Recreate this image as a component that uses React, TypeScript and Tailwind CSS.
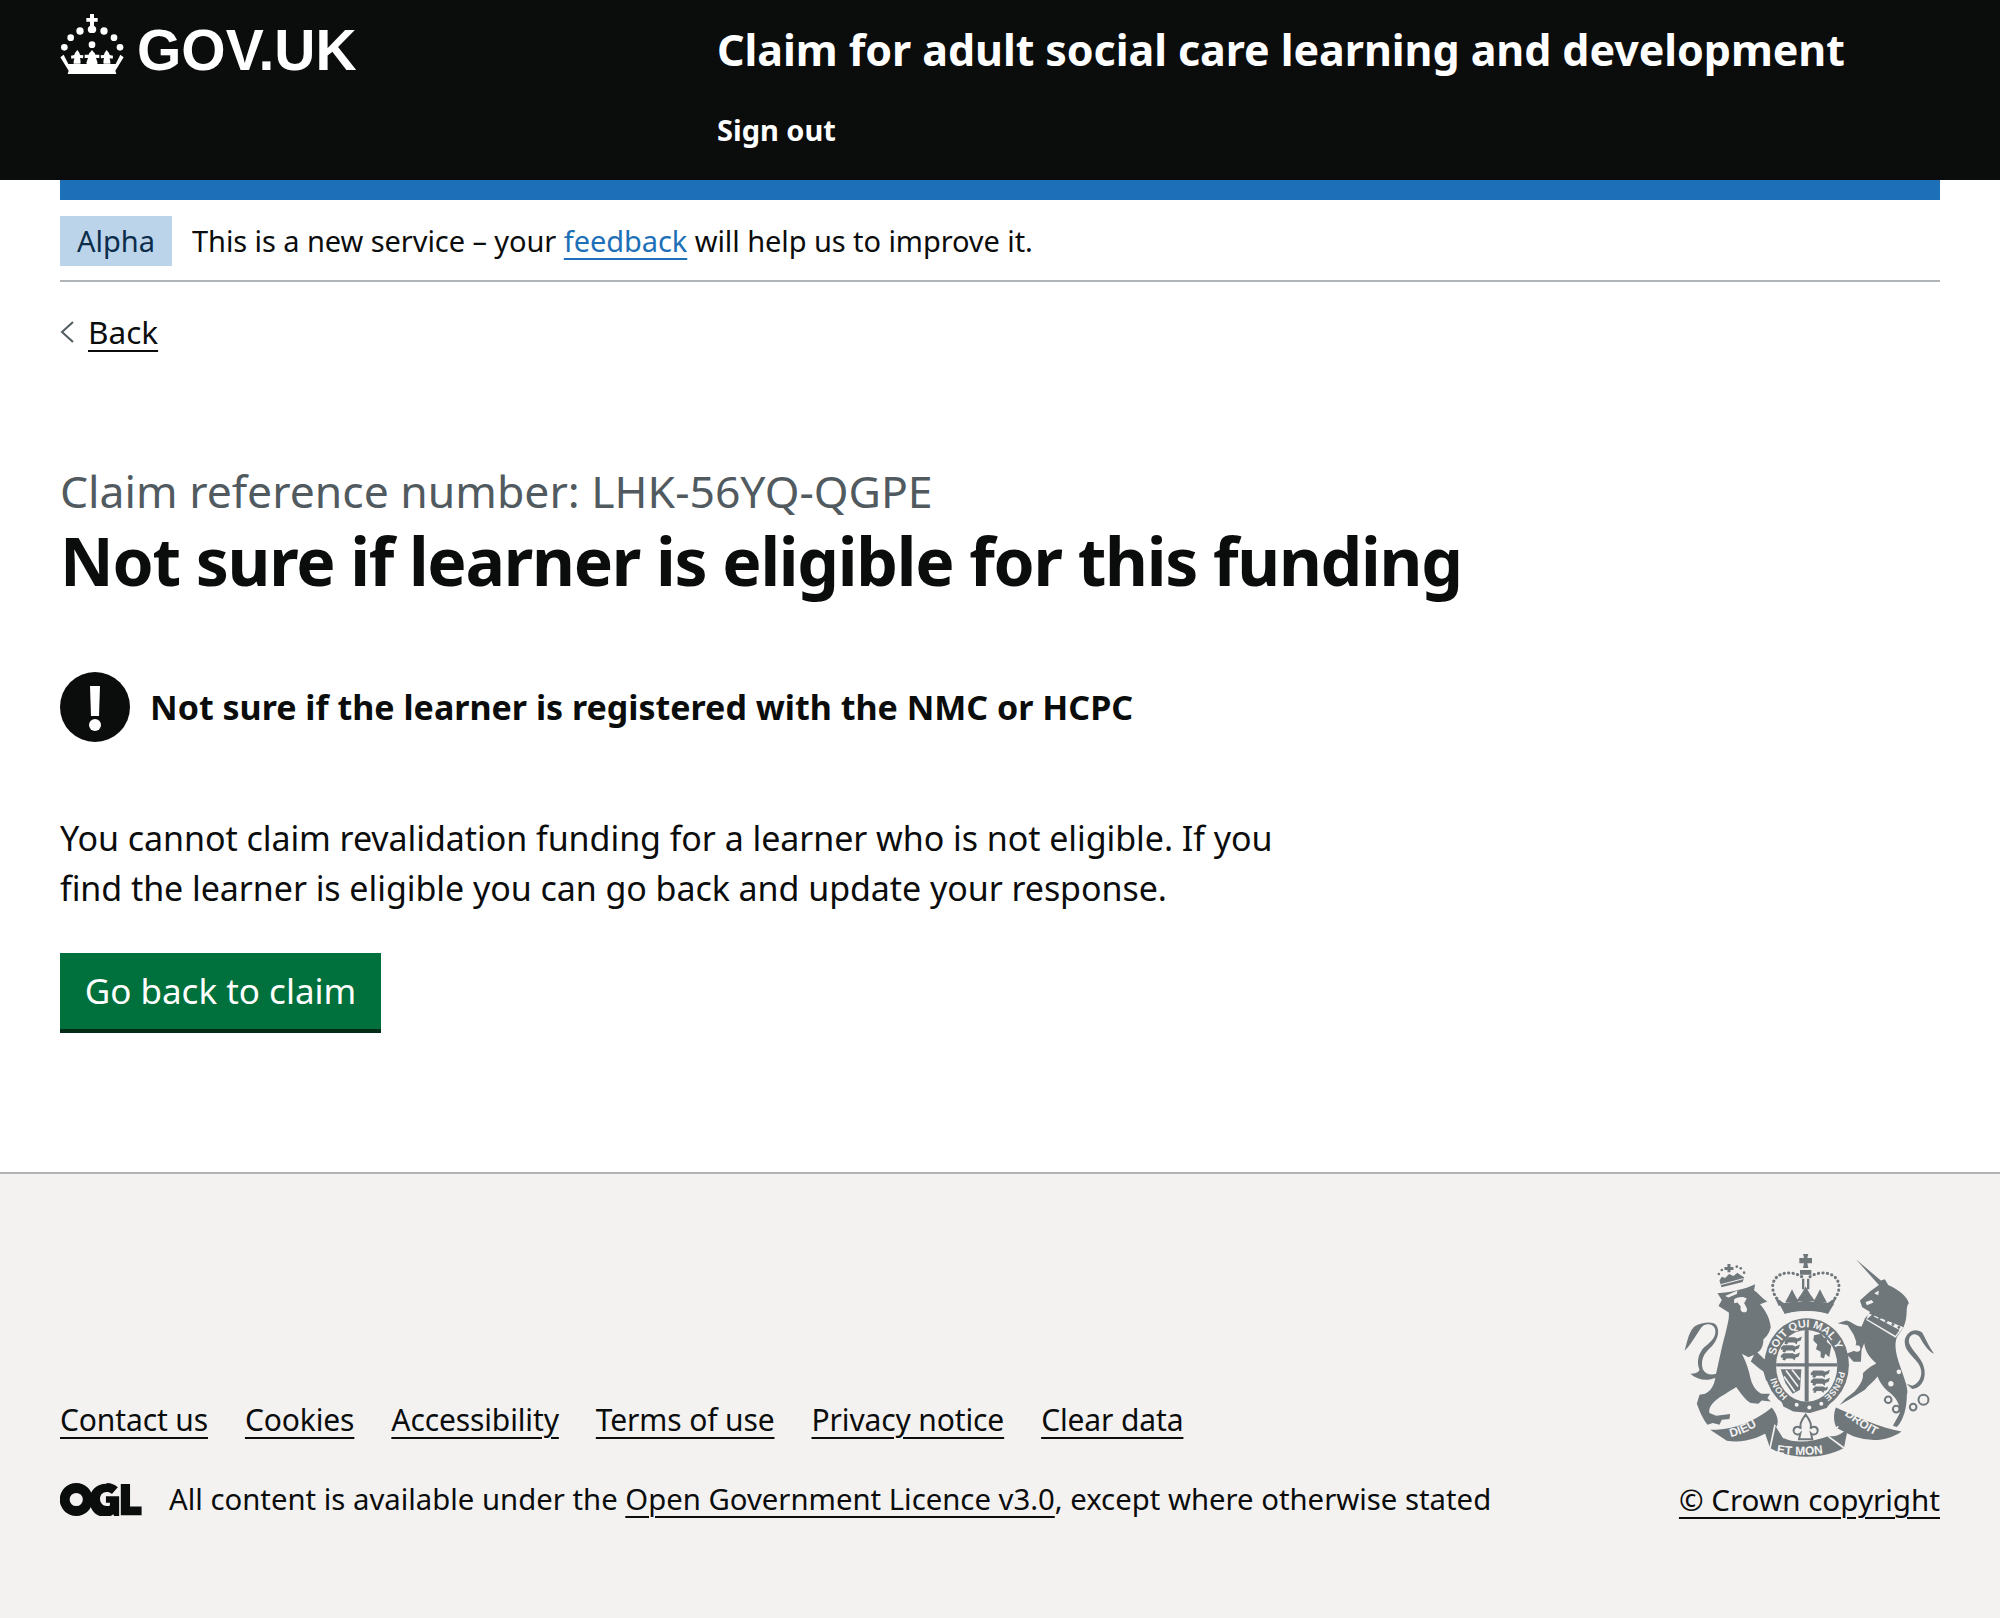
import React from 'react';

const Crown = () => (
  <svg viewBox="180 42 192 180" className="w-[64px] h-[60px] shrink-0" fill="#fff">
    <path d="M270 42h12v12h11v11h-11v12c9 4 9 18 0 22h-12c-9-4-9-18 0-22V65h-11V54h11z" />
    <circle cx="240" cy="93" r="11" />
    <circle cx="312" cy="93" r="11" />
    <circle cx="212" cy="113" r="10" />
    <circle cx="342" cy="113" r="10" />
    <circle cx="193" cy="142" r="10" />
    <circle cx="360" cy="142" r="10" />
    <circle cx="276" cy="134" r="10" />
    <path d="M276 150c6 8 10 10 10 14l12 0 0 10-10 0c2 8 6 12 4 18l-32 0c-2-6 2-10 4-18l-10 0 0-10 12 0c0-4 4-6 10-14z" />
    <path d="M232 150c5 7 8 11 8 15l10 1-1 9-9-1c1 7 3 11 1 17l-20 0c-1-6 1-10 2-16l-9 1-1-9 10-2c0-4 4-8 9-15z" />
    <path d="M320 150c-5 7-8 11-8 15l-10 1 1 9 9-1c-1 7-3 11-1 17l20 0c1-6-1-10-2-16l9 1 1-9-10-2c0-4-4-8-9-15z" />
    <path d="M181 172l10-8 14 28 142 0 14-28 10 8-25 40 3 10-146 0 3-10z" />
  </svg>
);

const Ogl = () => (
  <svg viewBox="60 85 246 100" className="w-[82px] h-[33px] shrink-0" fill="#0b0c0c">
    <path fillRule="evenodd" d="M108 85a50 50 0 1 0 0 100a50 50 0 1 0 0-100zm0 30a20 20 0 1 1 0 40a20 20 0 1 1 0-40z" />
    <path d="M200 85c14 0 26 5 34 13l-18 20c-5-4-10-6-16-6-12 0-20 9-20 21s8 22 21 22c4 0 7-1 9-2v-8h-12v-20h40v62h-14l-4-7c-6 5-14 8-24 8-28 0-48-23-48-51s20-50 52-50z" />
    <path d="M243 88h28v68h35v27h-63z" />
  </svg>
);

const Crest = () => (
  <svg viewBox="72 42 750 610" className="w-[250px] h-[203px] mr-[6px]" fill="#6f777b">
    <defs>
      <clipPath id="shieldClip">
        <ellipse cx="440" cy="378" rx="92" ry="108" />
      </clipPath>
    </defs>
    {/* lion */}
    <g transform="translate(60 30)">
      <path d="M112 130C150 128 195 118 225 103L222 122C235 130 245 145 262 155L240 163C255 180 270 205 272 232C268 250 258 262 250 268C250 285 245 300 232 308L250 325C268 335 285 360 284 378C280 392 270 398 258 392L250 365C235 355 225 345 212 335L222 315L205 322L185 312C195 330 205 355 210 380C215 405 228 425 245 432L270 432L262 445L272 455L245 452L235 462L212 460C195 450 185 435 168 412C150 425 120 440 103 455C92 465 85 478 88 490L108 498L150 493L148 508L125 510L118 525L98 520L82 525C70 510 60 490 50 462L58 435L75 432C95 420 102 405 105 385C115 340 125 290 135 255C142 225 148 205 146 188L115 168L125 150Z" />
      <path d="M108 383C80 395 55 392 30 372C45 372 55 368 58 360C48 335 55 310 72 292C90 278 110 262 105 238C100 222 82 220 68 228C55 240 40 275 13 303C22 270 28 240 45 228C65 218 95 212 108 225C122 245 110 275 92 292C72 310 60 330 68 358C75 372 90 378 108 372Z" />
      <path d="M135 138L172 122L170 132L145 143ZM162 148C175 140 190 138 200 146L192 160C198 170 205 180 198 186C188 190 178 184 182 170L172 158L162 160Z" fill="#f3f2f1" />
      {/* lion crown */}
      <path d="M142 42h9v9h9v9h-9v7h-9v-7h-9v-9h9z" />
      <circle cx="125" cy="60" r="4" /><circle cx="170" cy="50" r="4" /><circle cx="182" cy="55" r="4" />
      <circle cx="116" cy="72" r="4" /><circle cx="192" cy="68" r="4" />
      <path d="M118 92L125 80L135 84L147 72L160 78L172 68L180 74L192 82L188 96L124 112Z" />
      <path d="M122 104L190 86" stroke="#f3f2f1" strokeWidth="3" fill="none" />
    </g>

    {/* unicorn */}
    <g transform="translate(435 30)">
      <path d="M153 28L228 92L240 88L250 105C280 118 308 140 312 160C300 172 312 198 296 232L276 262C266 290 276 320 286 350C300 390 312 418 306 436C306 470 298 510 276 532L264 528L284 492C286 466 276 446 256 430C236 414 226 400 218 380C206 396 190 406 180 420L138 446L104 466L122 446L148 426C170 402 176 386 174 370C190 352 208 345 214 340C190 320 180 300 178 280L170 300L168 336L146 336L124 312L150 302L154 276L146 254L128 226L98 220L124 212C140 214 150 230 170 230L180 206L196 186L172 172L165 152L195 125L222 105Z" />
      <path d="M190 190L296 232L272 264L184 210Z" fill="#f3f2f1" />
      <path d="M186 207L272 258L284 240L200 196Z" />
      <path d="M204 190l5 6-5 6-5-6zM224 198l5 6-5 6-5-6zM244 208l5 6-5 6-5-6zM264 218l5 6-5 6-5-6zM282 226l5 6-5 6-5-6z" />
      <path d="M182 156L200 150L206 158L186 166ZM208 130L222 122L220 136Z" fill="#f3f2f1" />
      <path d="M322 408C345 400 360 370 340 340C322 315 296 300 300 270C306 245 330 232 352 248C362 265 372 290 388 312C368 302 355 280 345 262C330 245 312 255 312 275C315 295 338 312 352 338C370 375 355 415 322 418L305 402Z" />
      <g fill="#f3f2f1">
        <circle cx="165" cy="212" r="9" />
        <circle cx="156" cy="296" r="10" />
        <circle cx="291" cy="320" r="10" />
        <circle cx="282" cy="366" r="7" />
        <circle cx="258" cy="402" r="8" />
      </g>
      <g fill="none" stroke="#6f777b" strokeWidth="6">
        <circle cx="250" cy="450" r="10" />
        <circle cx="274" cy="478" r="10" />
        <circle cx="325" cy="472" r="10" />
        <circle cx="356" cy="450" r="15" />
      </g>
    </g>

    {/* royal crown */}
    <path d="M429 42h16l-3 12h14v16h-14l3 14h-16l3-14h-14V54h14z" />
    <path d="M420 90h34v14h-34zM426 116h7v32h-7zM441 116h7v32h-7z" />
    <g fill="none" stroke="#6f777b" strokeWidth="9" strokeDasharray="1 12.5" strokeLinecap="round">
      <path d="M425 110C390 88 335 98 338 145C340 165 350 175 358 185" />
      <path d="M450 110C485 88 540 98 537 145C535 165 525 175 517 185" />
    </g>
    <path d="M437 140l13 22 14 20-27 6-27-6 14-20zM396 148l9 18 12 22h-42l12-22zM480 148l9 18 12 22h-42l12-22zM344 172l32 20-20 6zM530 172l-32 20 20 6z" />
    <path d="M358 192C400 182 480 182 522 192L504 222C470 210 410 210 374 222Z" />

    {/* garter and shield */}
    <ellipse cx="440" cy="375" rx="127" ry="140" />
    <path d="M362 232C410 215 470 215 514 232" fill="none" stroke="#f3f2f1" strokeWidth="10" />
    <ellipse cx="440" cy="378" rx="92" ry="108" fill="#f3f2f1" />
    <g clipPath="url(#shieldClip)">
      <path d="M434 262h12v230h-12zM345 370h190v10H345z" />
      <path d="M368 300l8-8h28l8 4 14-6-4 12-10 4-2 8-7-6h-18l-4 6-8-2 2-6h-6z" />
      <path d="M362 324l8-8h28l8 4 14-6-4 12-10 4-2 8-7-6h-18l-4 6-8-2 2-6h-6z" />
      <path d="M362 348l8-8h28l8 4 14-6-4 12-10 4-2 8-7-6h-18l-4 6-8-2 2-6h-6z" />
      <path d="M452 400l8-8h28l8 4 14-6-4 12-10 4-2 8-7-6h-18l-4 6-8-2 2-6h-6z" />
      <path d="M452 424l8-8h28l8 4 14-6-4 12-10 4-2 8-7-6h-18l-4 6-8-2 2-6h-6z" />
      <path d="M458 448l8-8h24l6 4 8-4-2 10-10 4-2 6-6-6h-14l-4 6-6-2 2-6h-4z" />
      <path d="M462 286l22-4 8 12 12-2-4 14 14 12-6 34-12-10-4 14-10-4 0-16-14-8 4-14-12-12z" />
      <path d="M362 388L424 388L420 450L398 462L376 430Z" />
      <path d="M378 392L414 440M372 410L404 455M396 390L420 420" stroke="#f3f2f1" strokeWidth="5" fill="none" />
    </g>
    <path id="garterArc" d="M343 375A97 113 0 0 1 537 375" fill="none" />
    <path id="garterRight" d="M537 390A97 113 0 0 1 480 478" fill="none" />
    <path id="garterLow" d="M395 477A97 113 0 0 1 343 380" fill="none" />
    <g fontFamily="'Liberation Sans',sans-serif" fontWeight="700" fontSize="33" fill="#f3f2f1">
      <text><textPath href="#garterArc" startOffset="28">SOIT QUI MAL Y</textPath></text>
    </g>
    <g fontFamily="'Liberation Sans',sans-serif" fontWeight="700" fontSize="27" fill="#f3f2f1">
      <text><textPath href="#garterRight" startOffset="4">PENSE</textPath></text>
      <text><textPath href="#garterLow" startOffset="14">HONI</textPath></text>
    </g>
    <path d="M362 478C400 510 490 510 520 478L500 505L450 520L400 515L370 500Z" />
    <circle cx="410" cy="495" r="6" fill="#f3f2f1" />
    <circle cx="448" cy="503" r="6" fill="#f3f2f1" />
    <circle cx="484" cy="492" r="6" fill="#f3f2f1" />

    {/* motto */}
    <path d="M150 570C225 572 290 540 335 503C350 520 358 545 350 560C300 595 250 612 200 603Z" />
    <path d="M345 555C330 570 320 570 312 572L330 625C390 660 490 660 552 625L565 560C545 590 520 590 505 590C450 610 400 610 370 595Z" />
    <path d="M528 503C590 530 660 565 725 575C690 600 640 610 580 590L530 565C520 545 520 520 528 503Z" />
    <path d="M350 560L372 595M345 555L330 625" stroke="#f3f2f1" strokeWidth="5" fill="none" />
    <path d="M505 590L535 560M552 625L505 590" stroke="#f3f2f1" strokeWidth="5" fill="none" />
    <path d="M437 525c14 18 20 30 14 42 8-10 24-6 22 8-2 10-14 12-20 6l4 18h-40l4-18c-6 6-18 4-20-6-2-14 14-18 22-8-6-12 0-24 14-42z" fill="#f3f2f1" stroke="#6f777b" strokeWidth="6" />
    <path id="mottoL" d="M212 592C255 582 295 560 330 530" fill="none" />
    <path id="mottoM" d="M350 640C400 650 480 648 526 632" fill="none" />
    <path id="mottoR" d="M553 525C590 555 630 582 668 596" fill="none" />
    <g fontFamily="'Liberation Sans',sans-serif" fontWeight="700" fontSize="36" fill="#f3f2f1">
      <text><textPath href="#mottoL">DIEU</textPath></text>
      <text><textPath href="#mottoM">ET MON</textPath></text>
      <text><textPath href="#mottoR">DROIT</textPath></text>
    </g>
  </svg>
);

const links = ['Contact us', 'Cookies', 'Accessibility', 'Terms of use', 'Privacy notice', 'Clear data'];

const FooterLink = ({ children }: { children: React.ReactNode }) => (
  <a href="#" className="text-[#0b0c0c] underline decoration-2 underline-offset-[6px]">
    {children}
  </a>
);

export default function App() {
  return (
    <div className="font-['Noto_Sans',sans-serif] text-[#0b0c0c] min-h-[1618px] flex flex-col bg-white">
      {/* Header */}
      <header className="bg-[#0b0c0c] h-[180px] px-[60px] flex">
        <div className="w-[657px] flex items-start gap-[13px] pt-[14px]">
          <Crown />
          <span className="font-['Liberation_Sans',sans-serif] font-bold text-[57px] leading-[72px] text-white">GOV.UK</span>
        </div>
        <div className="pt-[18px] text-white font-bold">
          <div className="text-[43px] leading-[64px] tracking-[-0.08px]">Claim for adult social care learning and development</div>
          <div className="text-[29px] leading-[40px] mt-[28px]">Sign out</div>
        </div>
      </header>

      {/* Main */}
      <div className="px-[60px] flex-1">
        <div className="h-[20px] bg-[#1d70b8]" />
        <div className="flex items-start h-[82px] border-b-2 border-[#b1b4b6] pt-[16px]">
          <span className="bg-[#bbd4ea] text-[#0c2d4a] w-[112px] h-[50px] flex items-center justify-center text-[29px]">Alpha</span>
          <p className="ml-[20px] text-[29px] leading-[50px] tracking-[-0.07px]">
            This is a new service – your <a href="#" className="text-[#1d70b8] underline decoration-2 underline-offset-[6px]">feedback</a> will help us to improve it.
          </p>
        </div>

        <div className="mt-[30px] flex items-center text-[31.5px] leading-[40px]">
          <svg viewBox="0 0 14 24" className="w-[14px] h-[24px] text-[#505a5f] mr-[14px]" fill="none" stroke="currentColor" strokeWidth="2">
            <path d="M13 2L2 12l11 10" />
          </svg>
          <a href="#" className="underline decoration-2 underline-offset-[6px]">Back</a>
        </div>

        <p className="mt-[114px] text-[#505a5f] text-[44.5px] leading-[50px]">Claim reference number: LHK-56YQ-QGPE</p>
        <h1 className="mt-[4px] font-bold text-[66px] leading-[80px] tracking-[-1.25px]">Not sure if learner is eligible for this funding</h1>

        <div className="mt-[72px] flex items-center gap-[20px]">
          <span className="w-[70px] h-[70px] rounded-full bg-[#0b0c0c] text-white flex items-center justify-center shrink-0">
            <svg viewBox="0 0 70 70" className="w-[70px] h-[70px]" fill="#fff">
              <path d="M30 14h10l-1 30h-8z" />
              <circle cx="35" cy="53" r="6" />
            </svg>
          </span>
          <strong className="text-[34px] leading-[50px]">Not sure if the learner is registered with the NMC or HCPC</strong>
        </div>

        <p className="mt-[71px] text-[34px] leading-[50px] w-[1250px] tracking-[-0.06px]">
          You cannot claim revalidation funding for a learner who is not eligible. If you find the learner is eligible you can go back and update your response.
        </p>

        <button className="mt-[40px] block bg-[#00703c] text-white text-[35px] h-[80px] w-[321px] border-b-4 border-[#002d18]">Go back to claim</button>
      </div>

      {/* Footer */}
      <footer className="bg-[#f3f2f1] border-t-2 border-[#b1b4b6] h-[446px] px-[60px] pt-[80px] flex justify-between items-start">
        <div className="pt-[141px] text-[30px] leading-[50px]">
          <ul className="flex gap-[37px] tracking-[-0.13px]">
            {links.map(l => (
              <li key={l}><FooterLink>{l}</FooterLink></li>
            ))}
          </ul>
          <div className="flex items-center mt-[29px]">
            <Ogl />
            <span className="ml-[27px] text-[29.3px]">All content is available under the <FooterLink>Open Government Licence v3.0</FooterLink>, except where otherwise stated</span>
          </div>
        </div>
        <div className="flex flex-col items-end">
          <Crest />
          <div className="mt-[18px] text-[29.6px] leading-[50px]"><FooterLink>© Crown copyright</FooterLink></div>
        </div>
      </footer>
    </div>
  );
}
